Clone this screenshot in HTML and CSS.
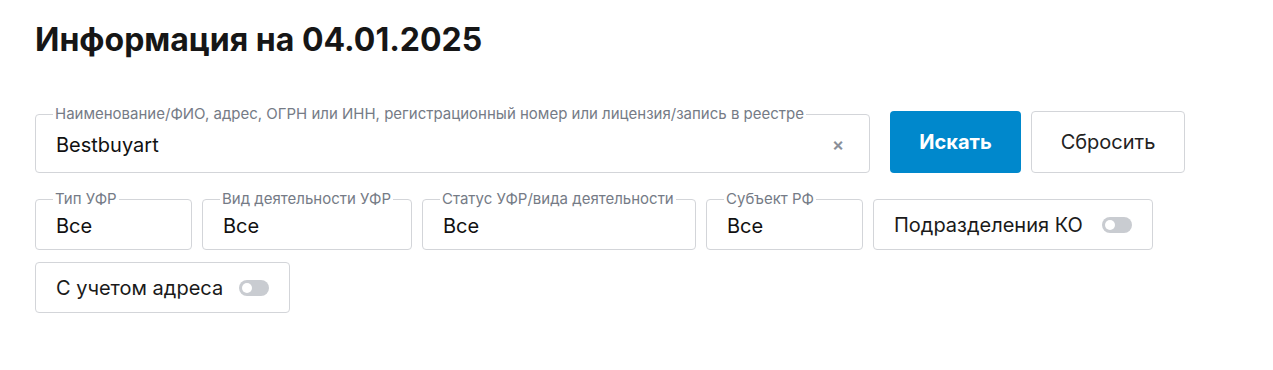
FILE: index.html
```html
<!DOCTYPE html>
<html lang="ru">
<head>
<meta charset="utf-8">
<link rel="stylesheet" href="styles.css">
</head>
<body>
<main class="page">
  <h1 class="title">Информация на 04.01.2025</h1>
  <div class="search-row">
    <fieldset class="field field-search">
      <legend>Наименование/ФИО, адрес, ОГРН или ИНН, регистрационный номер или лицензия/запись в реестре</legend>
      <div class="value-row">
        <span class="value">Bestbuyart</span>
        <span class="clear">×</span>
      </div>
    </fieldset>
    <button class="btn btn-primary">Искать</button>
    <button class="btn btn-secondary">Сбросить</button>
  </div>
  <div class="filters">
    <fieldset class="field w-156"><legend>Тип УФР</legend><div class="value">Все</div></fieldset>
    <fieldset class="field w-209"><legend>Вид деятельности УФР</legend><div class="value">Все</div></fieldset>
    <fieldset class="field w-273"><legend>Статус УФР/вида деятельности</legend><div class="value">Все</div></fieldset>
    <fieldset class="field w-156"><legend>Субъект РФ</legend><div class="value">Все</div></fieldset>
    <div class="toggle-box w-279"><span>Подразделения КО</span><span class="switch"></span></div>
  </div>
  <div class="filters">
    <div class="toggle-box w-254"><span>С учетом адреса</span><span class="switch"></span></div>
  </div>
</main>
</body>
</html>
```
FILE: styles.css
```css
* { box-sizing: border-box; }
body {
  margin: 0;
  background: #fff;
  font-family: Inter, "Noto Sans", Arial, sans-serif;
  color: #1a1a1a;
}
.page { padding: 20px 35px; }
.title {
  margin: 0;
  font-size: 32px;
  font-weight: 700;
  line-height: 40px;
  color: #161616;
}
.search-row {
  display: flex;
  align-items: flex-start;
  margin-top: 46px;
  gap: 10px;
}
.field {
  margin: 0;
  border: 1px solid #d3d5d9;
  border-radius: 4px;
  padding: 0 20px;
  min-width: 0;
}
.field legend {
  font-size: 15px;
  line-height: 16px;
  color: #757b86;
  padding: 0 2px;
  margin-left: -3px;
  white-space: nowrap;
}
.field-search { width: 835px; margin-right: 10px; }
.value-row {
  display: flex;
  align-items: center;
  justify-content: space-between;
  padding: 11px 0 15px;
}
.value {
  font-size: 20px;
  line-height: 24px;
  color: #111;
}
.filters .field .value { padding: 7px 0 11px; }
.clear {
  color: #8a8f99;
  font-size: 18px;
  line-height: 24px;
  font-weight: 600;
  margin-right: 5px;
}
.btn {
  height: 62px;
  border-radius: 4px;
  font-family: inherit;
  font-size: 20px;
  margin-top: 5px;
}
.btn-primary {
  width: 131px;
  background: #0088cc;
  border: none;
  color: #fff;
  font-weight: 700;
}
.btn-secondary {
  width: 154px;
  background: #fff;
  border: 1px solid #d3d5d9;
  color: #222;
}
.filters {
  display: flex;
  gap: 10px;
  margin-top: 18px;
}
.filters + .filters { margin-top: 12px; }
.toggle-box {
  height: 51px;
  border: 1px solid #d3d5d9;
  border-radius: 4px;
  padding: 0 20px;
  display: flex;
  align-items: center;
  justify-content: space-between;
  font-size: 20px;
  color: #1a1a1a;
  margin-top: 8px;
}
.filters + .filters .toggle-box { margin-top: 0; }
.switch {
  width: 30px;
  height: 16px;
  border-radius: 8px;
  background: #c9ccd1;
  position: relative;
}
.switch::after {
  content: "";
  position: absolute;
  left: 3px;
  top: 3px;
  width: 10px;
  height: 10px;
  border-radius: 50%;
  background: #fff;
}
.w-156 { width: 157px; }
.w-209 { width: 210px; }
.w-273 { width: 274px; }
.w-279 { width: 280px; }
.w-254 { width: 255px; }
```
